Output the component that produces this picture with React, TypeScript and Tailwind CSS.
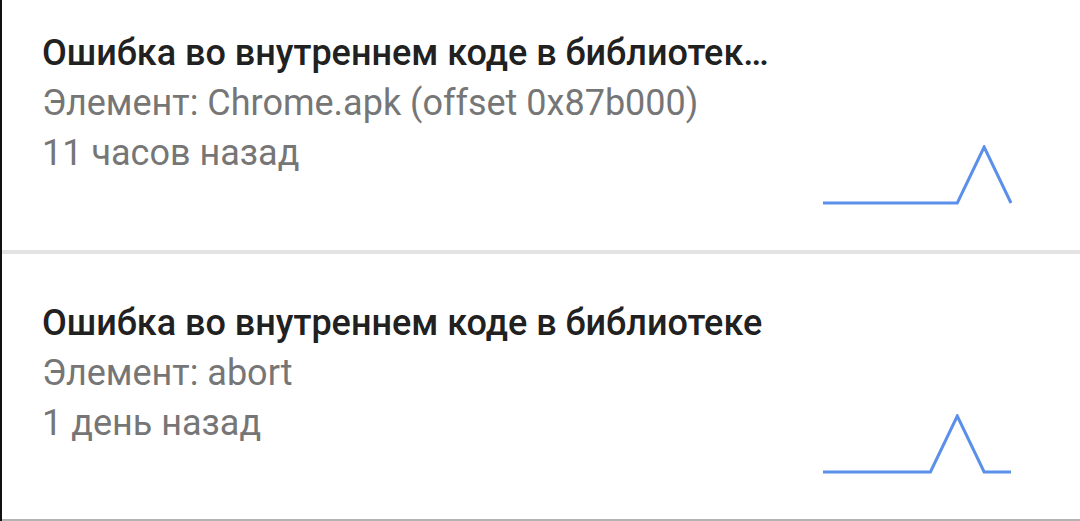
import React from "react";

type Item = { title: string; element: string; time: string; data: number[] };

const items: Item[] = [
  {
    title: "Ошибка во внутреннем коде в библиотек…",
    element: "Элемент: Chrome.apk (offset 0x87b000)",
    time: "11 часов назад",
    data: [0, 0, 0, 0, 0, 0, 1, 0],
  },
  {
    title: "Ошибка во внутреннем коде в библиотеке",
    element: "Элемент: abort",
    time: "1 день назад",
    data: [0, 0, 0, 0, 0, 1, 0, 0],
  },
];

function Spark({ data }: { data: number[] }) {
  const w = 192;
  const h = 60;
  const step = (w - 4) / (data.length - 1);
  const pts = data
    .map((v, i) => `${(2 + i * step).toFixed(2)},${(58 - v * 56).toFixed(2)}`)
    .join(" ");
  return (
    <svg width={w} height={h} viewBox={`0 0 ${w} ${h}`} className="block">
      <polyline
        points={pts}
        fill="none"
        stroke="#5b90ea"
        strokeWidth={3}
        strokeLinejoin="miter"
        strokeLinecap="butt"
      />
    </svg>
  );
}

function Card({ item, top, height }: { item: Item; top: string; height: string }) {
  return (
    <div className={`flex ${height} pl-[40px] pr-[67px] pb-[45px]`}>
      <div className={`w-[760px] shrink-0 ${top}`}>
        <div className="whitespace-nowrap text-[36px] leading-[50px] font-medium text-[#212121]">
          {item.title}
        </div>
        <div className="whitespace-nowrap text-[36px] leading-[50px] text-[#767676]">{item.element}</div>
        <div className="whitespace-nowrap text-[36px] leading-[50px] text-[#767676]">{item.time}</div>
      </div>
      <div className="ml-auto self-end">
        <Spark data={item.data} />
      </div>
    </div>
  );
}

export default function App() {
  return (
    <div
      className="w-[1080px] h-[521px] overflow-hidden bg-white border-l-2 border-[#111] flex flex-col"
      style={{ fontFamily: "Roboto, 'Noto Sans', sans-serif" }}
    >
      <Card item={items[0]} top="pt-[28px]" height="h-[250px]" />
      <div className="h-[4px] bg-[#e3e3e3] shrink-0" />
      <Card item={items[1]} top="pt-[44px]" height="h-[265px]" />
      <div className="h-[2px] bg-[#b3b3b3] shrink-0" />
    </div>
  );
}
